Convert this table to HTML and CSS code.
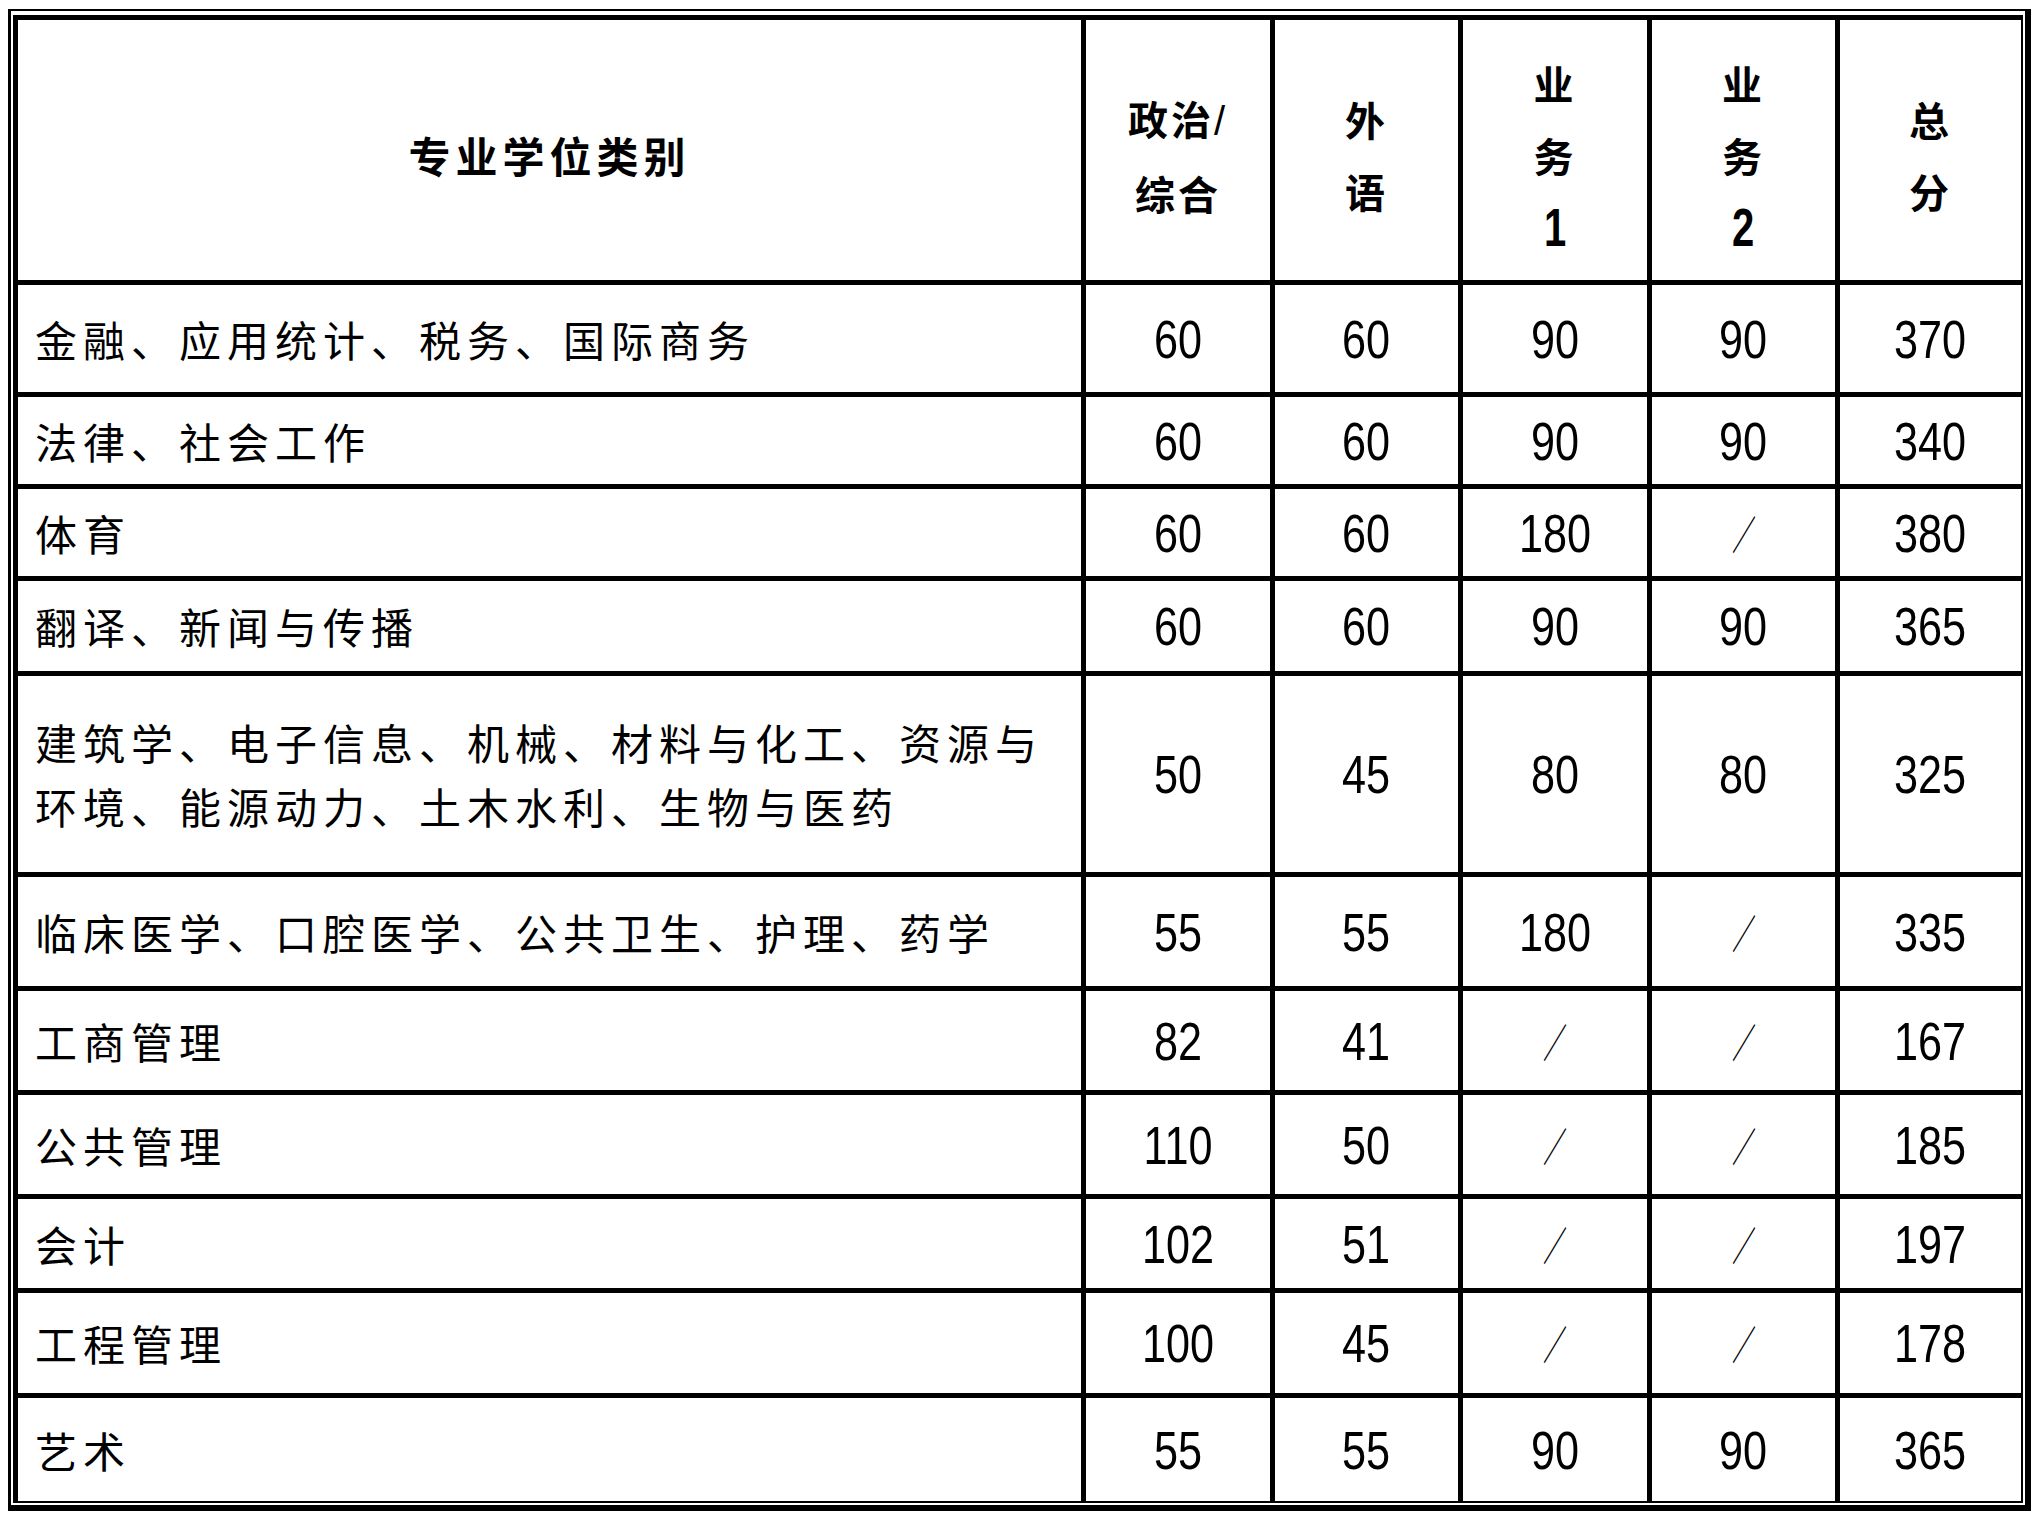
FILE: index.html
```html
<!DOCTYPE html>
<html lang="zh-CN">
<head>
<meta charset="utf-8">
<title>专业学位类别分数线</title>
<link rel="stylesheet" href="styles.css">
</head>
<body>
<div class="frame">
  <div class="grid">
    <div class="cell head head-name">专业学位类别</div>
    <div class="cell head"><span>政治<span class="hs">/</span></span><span>综合</span></div>
    <div class="cell head"><span>外</span><span>语</span></div>
    <div class="cell head"><span>业</span><span>务</span><span class="hd">1</span></div>
    <div class="cell head"><span>业</span><span>务</span><span class="hd">2</span></div>
    <div class="cell head"><span>总</span><span>分</span></div>

    <div class="cell name">金融、应用统计、税务、国际商务</div>
    <div class="cell num"><span>60</span></div><div class="cell num"><span>60</span></div><div class="cell num"><span>90</span></div><div class="cell num"><span>90</span></div><div class="cell num"><span>370</span></div>

    <div class="cell name">法律、社会工作</div>
    <div class="cell num"><span>60</span></div><div class="cell num"><span>60</span></div><div class="cell num"><span>90</span></div><div class="cell num"><span>90</span></div><div class="cell num"><span>340</span></div>

    <div class="cell name">体育</div>
    <div class="cell num"><span>60</span></div><div class="cell num"><span>60</span></div><div class="cell num"><span>180</span></div><div class="cell num slash"><span>／</span></div><div class="cell num"><span>380</span></div>

    <div class="cell name">翻译、新闻与传播</div>
    <div class="cell num"><span>60</span></div><div class="cell num"><span>60</span></div><div class="cell num"><span>90</span></div><div class="cell num"><span>90</span></div><div class="cell num"><span>365</span></div>

    <div class="cell name multi">建筑学、电子信息、机械、材料与化工、资源与<br>环境、能源动力、土木水利、生物与医药</div>
    <div class="cell num"><span>50</span></div><div class="cell num"><span>45</span></div><div class="cell num"><span>80</span></div><div class="cell num"><span>80</span></div><div class="cell num"><span>325</span></div>

    <div class="cell name">临床医学、口腔医学、公共卫生、护理、药学</div>
    <div class="cell num"><span>55</span></div><div class="cell num"><span>55</span></div><div class="cell num"><span>180</span></div><div class="cell num slash"><span>／</span></div><div class="cell num"><span>335</span></div>

    <div class="cell name">工商管理</div>
    <div class="cell num"><span>82</span></div><div class="cell num"><span>41</span></div><div class="cell num slash"><span>／</span></div><div class="cell num slash"><span>／</span></div><div class="cell num"><span>167</span></div>

    <div class="cell name">公共管理</div>
    <div class="cell num"><span>110</span></div><div class="cell num"><span>50</span></div><div class="cell num slash"><span>／</span></div><div class="cell num slash"><span>／</span></div><div class="cell num"><span>185</span></div>

    <div class="cell name">会计</div>
    <div class="cell num"><span>102</span></div><div class="cell num"><span>51</span></div><div class="cell num slash"><span>／</span></div><div class="cell num slash"><span>／</span></div><div class="cell num"><span>197</span></div>

    <div class="cell name">工程管理</div>
    <div class="cell num"><span>100</span></div><div class="cell num"><span>45</span></div><div class="cell num slash"><span>／</span></div><div class="cell num slash"><span>／</span></div><div class="cell num"><span>178</span></div>

    <div class="cell name">艺术</div>
    <div class="cell num"><span>55</span></div><div class="cell num"><span>55</span></div><div class="cell num"><span>90</span></div><div class="cell num"><span>90</span></div><div class="cell num"><span>365</span></div>
  </div>
</div>
</body>
</html>
```

FILE: styles.css
```css
html, body {
  margin: 0;
  padding: 0;
  background: #ffffff;
}

body {
  font-family: "Noto Sans CJK SC", "Noto Sans", sans-serif;
  color: #000000;
}

.frame {
  margin: 9px 0 0 8px;
  width: fit-content;
  border-style: solid;
  border-color: #000000;
  border-width: 2px 6px 6px 3px;
  padding: 4px 2px 2px 2px;
  background: #ffffff;
}

.grid {
  display: grid;
  grid-template-columns: 1063px 184px 183px 184px 183px 181px;
  grid-template-rows: 260px 107px 87px 87px 90px 196px 109px 99px 99px 89px 100px 103px;
  gap: 5px;
  padding: 5px 2px 2px 5px;
  background: #000000;
}

.cell {
  background: #ffffff;
  display: flex;
  align-items: center;
}

.head {
  flex-direction: column;
  justify-content: center;
  padding-top: 10px;
  box-sizing: border-box;
  font-size: 40px;
  font-weight: 700;
  line-height: 72px;
  letter-spacing: 3px;
  text-align: center;
}

.head-name {
  flex-direction: row;
  font-size: 42px;
  letter-spacing: 5px;
}

.hs {
  font-family: "Liberation Sans", sans-serif;
  font-weight: 400;
}

.hd {
  display: inline-block;
  font-family: "Liberation Sans", sans-serif;
  font-size: 54px;
  font-weight: 700;
  letter-spacing: 0;
  transform: scaleX(0.74);
}

.name {
  padding-left: 17px;
  font-size: 42px;
  font-weight: 400;
  letter-spacing: 6px;
  line-height: 64px;
  white-space: nowrap;
}

.num {
  justify-content: center;
  font-family: "Liberation Sans", sans-serif;
  font-size: 54px;
  line-height: 60px;
}

.num span {
  display: inline-block;
  transform: scaleX(0.8);
}

.slash span {
  transform: scaleX(0.6);
  font-family: "Noto Sans CJK SC", sans-serif;
  font-weight: 400;
  font-size: 40px;
  color: #000000;
}
```
